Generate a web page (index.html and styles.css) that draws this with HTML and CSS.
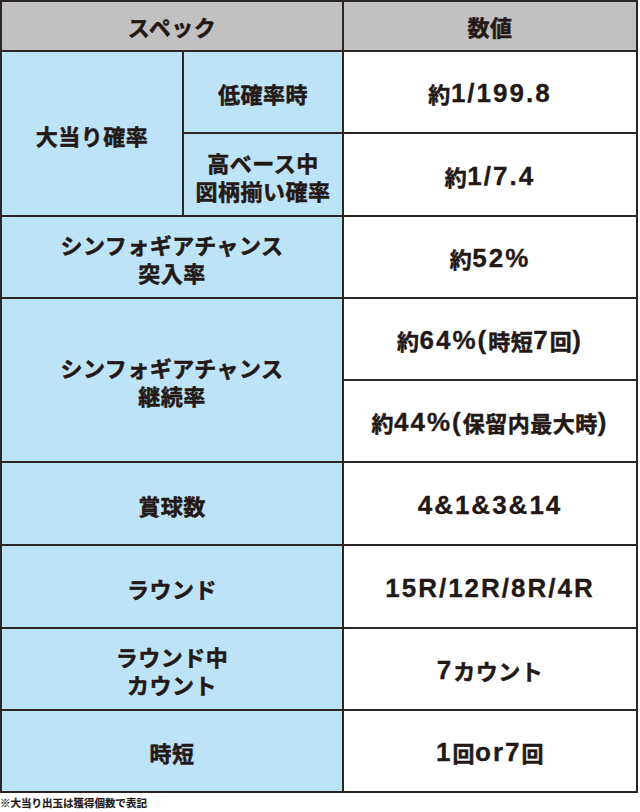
FILE: index.html
```html
<!DOCTYPE html>
<html lang="ja">
<head>
<meta charset="utf-8">
<link rel="stylesheet" href="styles.css">
</head>
<body>
<div class="spec">
  <div class="cell head c12">スペック</div>
  <div class="cell head c3">数値</div>

  <div class="cell key c1 r2">大当り確率</div>
  <div class="cell key c2">低確率時</div>
  <div class="cell val c3">約<span class="n">1/199.8</span></div>
  <div class="cell key c2 two">高ベース中<br>図柄揃い確率</div>
  <div class="cell val c3">約<span class="n">1/7.4</span></div>

  <div class="cell key c12 two">シンフォギアチャンス<br>突入率</div>
  <div class="cell val c3">約<span class="n">52%</span></div>

  <div class="cell key c12 r2 two">シンフォギアチャンス<br>継続率</div>
  <div class="cell val c3">約<span class="n">64%(</span>時短<span class="n">7</span>回<span class="n">)</span></div>
  <div class="cell val c3">約<span class="n">44%(</span>保留内最大時<span class="n">)</span></div>

  <div class="cell key c12">賞球数</div>
  <div class="cell val c3"><span class="n">4&amp;1&amp;3&amp;14</span></div>

  <div class="cell key c12">ラウンド</div>
  <div class="cell val c3"><span class="n">15R/12R/8R/4R</span></div>

  <div class="cell key c12 two">ラウンド中<br>カウント</div>
  <div class="cell val c3"><span class="n">7</span>カウント</div>

  <div class="cell key c12">時短</div>
  <div class="cell val c3"><span class="n">1</span>回<span class="n">or7</span>回</div>
</div>
<p class="note">※大当り出玉は獲得個数で表記</p>
</body>
</html>
```
FILE: styles.css
```css
html, body {
  margin: 0;
  padding: 0;
  background: #ffffff;
}
body {
  font-family: "Noto Sans CJK JP", sans-serif;
  font-weight: 700;
  color: #231815;
}
.spec {
  width: 638px;
  box-sizing: border-box;
  display: grid;
  grid-template-columns: 180px 158px 292px;
  grid-template-rows: 48px 80px 81px 80px 80px 80px 81px 81px 80px 80px;
  gap: 2px;
  padding: 2px;
  background: #2b2523;
}
.cell {
  display: flex;
  align-items: center;
  justify-content: center;
  text-align: center;
  font-size: 22px;
  line-height: 28px;
  letter-spacing: 0.5px;
  padding-top: 2px;
  box-sizing: border-box;
  -webkit-text-stroke: 0.5px #231815;
}
.head {
  background: #c0c1c0;
  padding-top: 0;
}
.key {
  background: #bde3f7;
}
.val {
  background: #ffffff;
}
.n {
  font-family: "Liberation Sans", sans-serif;
  font-weight: 700;
  font-size: 26px;
  letter-spacing: 2px;
  -webkit-text-stroke: 0.3px #231815;
}
.c1 { grid-column: 1; }
.c2 { grid-column: 2; }
.c12 { grid-column: 1 / 3; }
.c3 { grid-column: 3; }
.r2 { grid-row: span 2; }
.note {
  margin: 3px 0 0 0;
  font-size: 10.5px;
  line-height: 14px;
  letter-spacing: 0;
  -webkit-text-stroke: 0.2px #231815;
}
```
